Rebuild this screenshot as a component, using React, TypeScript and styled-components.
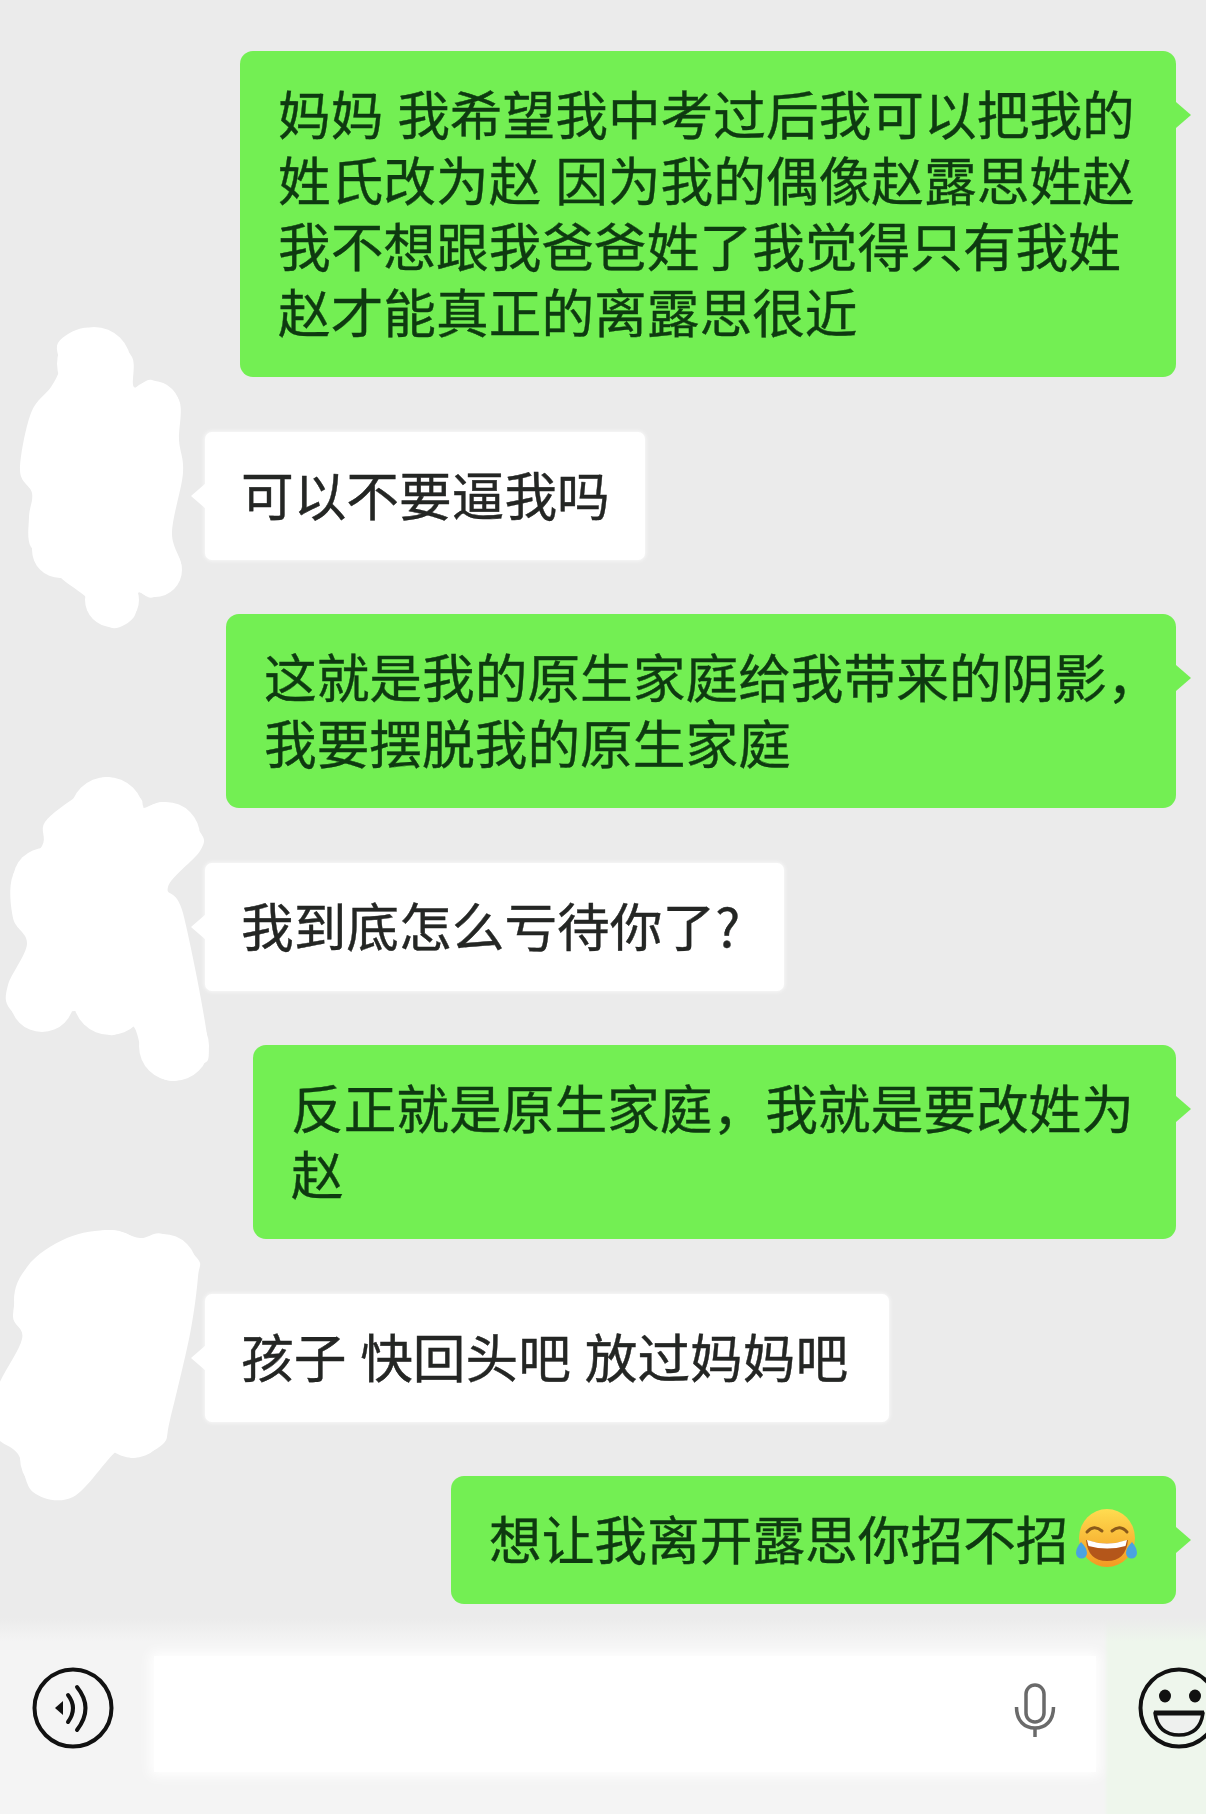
import React from 'react';
import styled, { createGlobalStyle } from 'styled-components';

const GlobalStyle = createGlobalStyle`
  html, body {
    margin: 0;
    padding: 0;
    background: #ebebeb;
  }
  #root {
    width: 1206px;
    height: 1814px;
    overflow: hidden;
  }
`;

const Page = styled.div`
  display: flex;
  flex-direction: column;
  width: 1206px;
  height: 1814px;
  overflow: hidden;
  background: #ebebeb;
  font-family: 'Noto Sans CJK SC', 'Noto Sans', sans-serif;
`;

const Chat = styled.div`
  flex: 1;
  display: flex;
  flex-direction: column;
  gap: 54.5px;
  padding-top: 51px;
  filter: blur(0.6px);
`;

const Row = styled.div<{ $mine?: boolean }>`
  position: relative;
  display: flex;
  justify-content: ${(p) => (p.$mine ? 'flex-end' : 'flex-start')};
  padding: ${(p) => (p.$mine ? '0 30px 0 0' : '0 0 0 205px')};
`;

const Bubble = styled.div<{ $mine?: boolean; $width: number }>`
  position: relative;
  display: flex;
  align-items: center;
  box-sizing: border-box;
  width: ${(p) => p.$width}px;
  padding: 28px 0 34px ${(p) => (p.$mine ? 38 : 36)}px;
  border-radius: ${(p) => (p.$mine ? 13 : 7)}px;
  background: ${(p) => (p.$mine ? '#73ef53' : '#ffffff')};
  box-shadow: ${(p) => (p.$mine ? 'none' : '0 0 5px #ffffff')};
  color: ${(p) => (p.$mine ? '#0e3a10' : '#242624')};
  font-size: 52.7px;
  line-height: 66px;
  word-spacing: 2px;
  white-space: nowrap;
  -webkit-text-stroke: 0.4px currentColor;

  &::after {
    content: '';
    position: absolute;
    top: 51px;
    ${(p) => (p.$mine ? 'right: -15px;' : 'left: -14px;')}
    border-style: solid;
    border-width: 13px ${(p) => (p.$mine ? '0 13px 15px' : '15px 13px 0')};
    border-color: transparent
      ${(p) => (p.$mine ? 'transparent transparent #73ef53' : '#ffffff transparent transparent')};
  }
`;

const Blob = styled.svg<{ $top: number; $height: number }>`
  position: absolute;
  left: 0;
  top: ${(p) => p.$top}px;
  width: 215px;
  height: ${(p) => p.$height}px;
  fill: #ffffff;
  z-index: 1;
`;

const LaughIcon = styled.svg`
  flex: none;
  width: 63px;
  height: 58px;
  margin: 2px 0 0 6px;
`;

const Footer = styled.div`
  flex: none;
  display: flex;
  align-items: flex-start;
  height: 196px;
  box-sizing: border-box;
  padding: 32px 0 0 32px;
  overflow: hidden;
  background: linear-gradient(180deg, #ebebeb 0, rgba(235, 235, 235, 0) 24px),
    linear-gradient(90deg, #f4f4f4 1104px, #eef6ec 1108px);
`;

const RoundIcon = styled.svg<{ $gap: number }>`
  flex: none;
  width: 82px;
  height: 84px;
  margin: 16px 0 0 ${(p) => p.$gap}px;
`;

const InputBox = styled.div`
  flex: none;
  display: flex;
  justify-content: flex-end;
  box-sizing: border-box;
  width: 942px;
  height: 116px;
  margin: 6px 4px 0 40px;
  padding: 27px 40px 0 0;
  background: #ffffff;
  box-shadow: 0 0 12px 4px #ffffff;
`;

const MicIcon = styled.svg`
  width: 42px;
  height: 55px;
`;

type Point = [number, number];
type Lobe = [number, number, number];

// catmull-rom through the traced outline of each scribble
function smoothPath(points: Point[]) {
  const n = points.length;
  let d = `M${points[0][0]} ${points[0][1]}`;
  for (let i = 0; i < n; i++) {
    const p0 = points[(i - 1 + n) % n];
    const p1 = points[i];
    const p2 = points[(i + 1) % n];
    const p3 = points[(i + 2) % n];
    const c1x = p1[0] + (p2[0] - p0[0]) / 6;
    const c1y = p1[1] + (p2[1] - p0[1]) / 6;
    const c2x = p2[0] - (p3[0] - p1[0]) / 6;
    const c2y = p2[1] - (p3[1] - p1[1]) / 6;
    d += `C${c1x} ${c1y} ${c2x} ${c2y} ${p2[0]} ${p2[1]}`;
  }
  return d + 'Z';
}

const blobOne: Point[] = [
  [83, 328], [107, 335], [132, 357], [134, 387], [152, 380], [179, 400], [179, 440], [183, 473],
  [172, 533], [181, 570], [154, 597], [138, 593], [134, 617], [112, 628], [89, 610], [87, 598],
  [60, 577], [56, 563], [31, 547], [29, 517], [32, 493], [20, 470], [31, 413], [51, 387],
  [60, 367], [58, 343],
];
const lobesOne: Lobe[] = [
  [94, 364, 37], [153, 408, 27], [155, 570, 27], [112, 600, 27], [60, 550, 28],
];

const blobTwo: Point[] = [
  [107, 777], [140, 798], [143, 808], [167, 803], [200, 832], [200, 851], [168, 887], [183, 913],
  [208, 1042], [200, 1066], [173, 1081], [147, 1066], [133, 1026], [110, 1035], [75, 1011],
  [43, 1030], [10, 1009], [8, 985], [27, 944], [13, 918], [13, 875], [42, 846], [45, 822], [77, 796],
];
const lobesTwo: Lobe[] = [
  [107, 814, 37], [166, 836, 34], [45, 880, 32], [174, 1046, 35], [42, 1000, 32], [110, 998, 37],
];

const blobThree: Point[] = [
  [110, 1230], [140, 1238], [163, 1234], [197, 1258], [198, 1277], [190, 1334], [170, 1420],
  [163, 1444], [133, 1458], [117, 1451], [73, 1497], [33, 1492], [18, 1454], [-4, 1435], [-4, 1392],
  [22, 1339], [13, 1315], [27, 1267], [67, 1238],
];
const lobesThree: Lobe[] = [
  [163, 1268, 34], [110, 1272, 42], [133, 1426, 32], [58, 1458, 38], [60, 1300, 46],
];

function Scribble({ points, lobes, rowTop }: { points: Point[]; lobes: Lobe[]; rowTop: number }) {
  const ys = points.map((p) => p[1]);
  const minY = Math.min(...ys) - 6;
  const maxY = Math.max(...ys) + 6;
  return (
    <Blob
      $top={minY - rowTop}
      $height={maxY - minY}
      viewBox={`0 ${minY} 215 ${maxY - minY}`}
      aria-hidden="true"
    >
      <path d={smoothPath(points)} />
      {lobes.map(([cx, cy, r]) => (
        <circle key={`${cx}-${cy}`} cx={cx} cy={cy} r={r} />
      ))}
    </Blob>
  );
}

function Laugh() {
  return (
    <LaughIcon viewBox="0 0 63 58" aria-hidden="true">
      <defs>
        <linearGradient id="face" x1="0" y1="0" x2="0" y2="1">
          <stop offset="0" stopColor="#ffdc50" />
          <stop offset="1" stopColor="#f39a22" />
        </linearGradient>
      </defs>
      <ellipse cx="32" cy="29" rx="28" ry="29" fill="url(#face)" />
      <path d="M12 23q7-8 15-1M37 22q8-7 15 1" fill="none" stroke="#8a5a1a" strokeWidth="3" strokeLinecap="round" />
      <path d="M11 31q21 7 42 0q-2 21-21 21T11 31Z" fill="#b4561a" />
      <path d="M12 31q20 7 40 0l-1.500 6q-18 5-37 0Z" fill="#ffffff" />
      <path d="M6 33q6 6 6 11a5.500 5.500 0 0 1-11 0q0-5 5-11ZM57 33q-6 6-6 11a5.500 5.500 0 0 0 11 0q0-5-5-11Z" fill="#4aa3e0" />
    </LaughIcon>
  );
}

export default function App() {
  return (
    <Page>
      <GlobalStyle />
      <Chat>
        <Row $mine>
          <Bubble $mine $width={936}>
            <div>
              妈妈 我希望我中考过后我可以把我的
              <br />
              姓氏改为赵 因为我的偶像赵露思姓赵
              <br />
              我不想跟我爸爸姓了我觉得只有我姓
              <br />
              赵才能真正的离露思很近
            </div>
          </Bubble>
        </Row>
        <Row>
          <Scribble points={blobOne} lobes={lobesOne} rowTop={431.5} />
          <Bubble $width={440}>可以不要逼我吗</Bubble>
        </Row>
        <Row $mine>
          <Bubble $mine $width={950}>
            <div>
              这就是我的原生家庭给我带来的阴影，
              <br />
              我要摆脱我的原生家庭
            </div>
          </Bubble>
        </Row>
        <Row>
          <Scribble points={blobTwo} lobes={lobesTwo} rowTop={862.5} />
          <Bubble $width={579}>我到底怎么亏待你了?</Bubble>
        </Row>
        <Row $mine>
          <Bubble $mine $width={923}>
            <div>
              反正就是原生家庭，我就是要改姓为
              <br />赵
            </div>
          </Bubble>
        </Row>
        <Row>
          <Scribble points={blobThree} lobes={lobesThree} rowTop={1293.5} />
          <Bubble $width={684}>孩子 快回头吧 放过妈妈吧</Bubble>
        </Row>
        <Row $mine>
          <Bubble $mine $width={725}>
            想让我离开露思你招不招
            <Laugh />
          </Bubble>
        </Row>
      </Chat>
      <Footer>
        <RoundIcon $gap={0} viewBox="0 0 82 84" fill="none" stroke="#111" strokeLinecap="round" aria-hidden="true">
          <circle cx="41" cy="42" r="38.500" strokeWidth="4" />
          <path d="M23 42l8-7v14Z" fill="#111" stroke="none" />
          <path d="M36 29q10 13 0 27" strokeWidth="4" />
          <path d="M45 21q17 21 0 43" strokeWidth="4" />
        </RoundIcon>
        <InputBox>
          <MicIcon viewBox="0 0 42 55" fill="none" stroke="#6a6a6a" strokeWidth="3.500" aria-hidden="true">
            <rect x="12" y="2" width="18" height="37" rx="9" />
            <path d="M2.500 24c0 14 8 21 18.500 21s18.500-7 18.500-21" />
            <path d="M21 45v9" />
          </MicIcon>
        </InputBox>
        <RoundIcon $gap={38} viewBox="0 0 82 84" fill="none" stroke="#111" aria-hidden="true">
          <circle cx="41" cy="42" r="38.500" strokeWidth="4" />
          <ellipse cx="27" cy="30" rx="6" ry="6.500" fill="#111" stroke="none" />
          <ellipse cx="57" cy="30" rx="6" ry="6.500" fill="#111" stroke="none" />
          <path d="M17 47h48q-3 22-24 22T17 47Z" strokeWidth="3.500" fill="#eef0ee" strokeLinejoin="round" />
          <path d="M16 47h50" strokeWidth="5" />
        </RoundIcon>
      </Footer>
    </Page>
  );
}
